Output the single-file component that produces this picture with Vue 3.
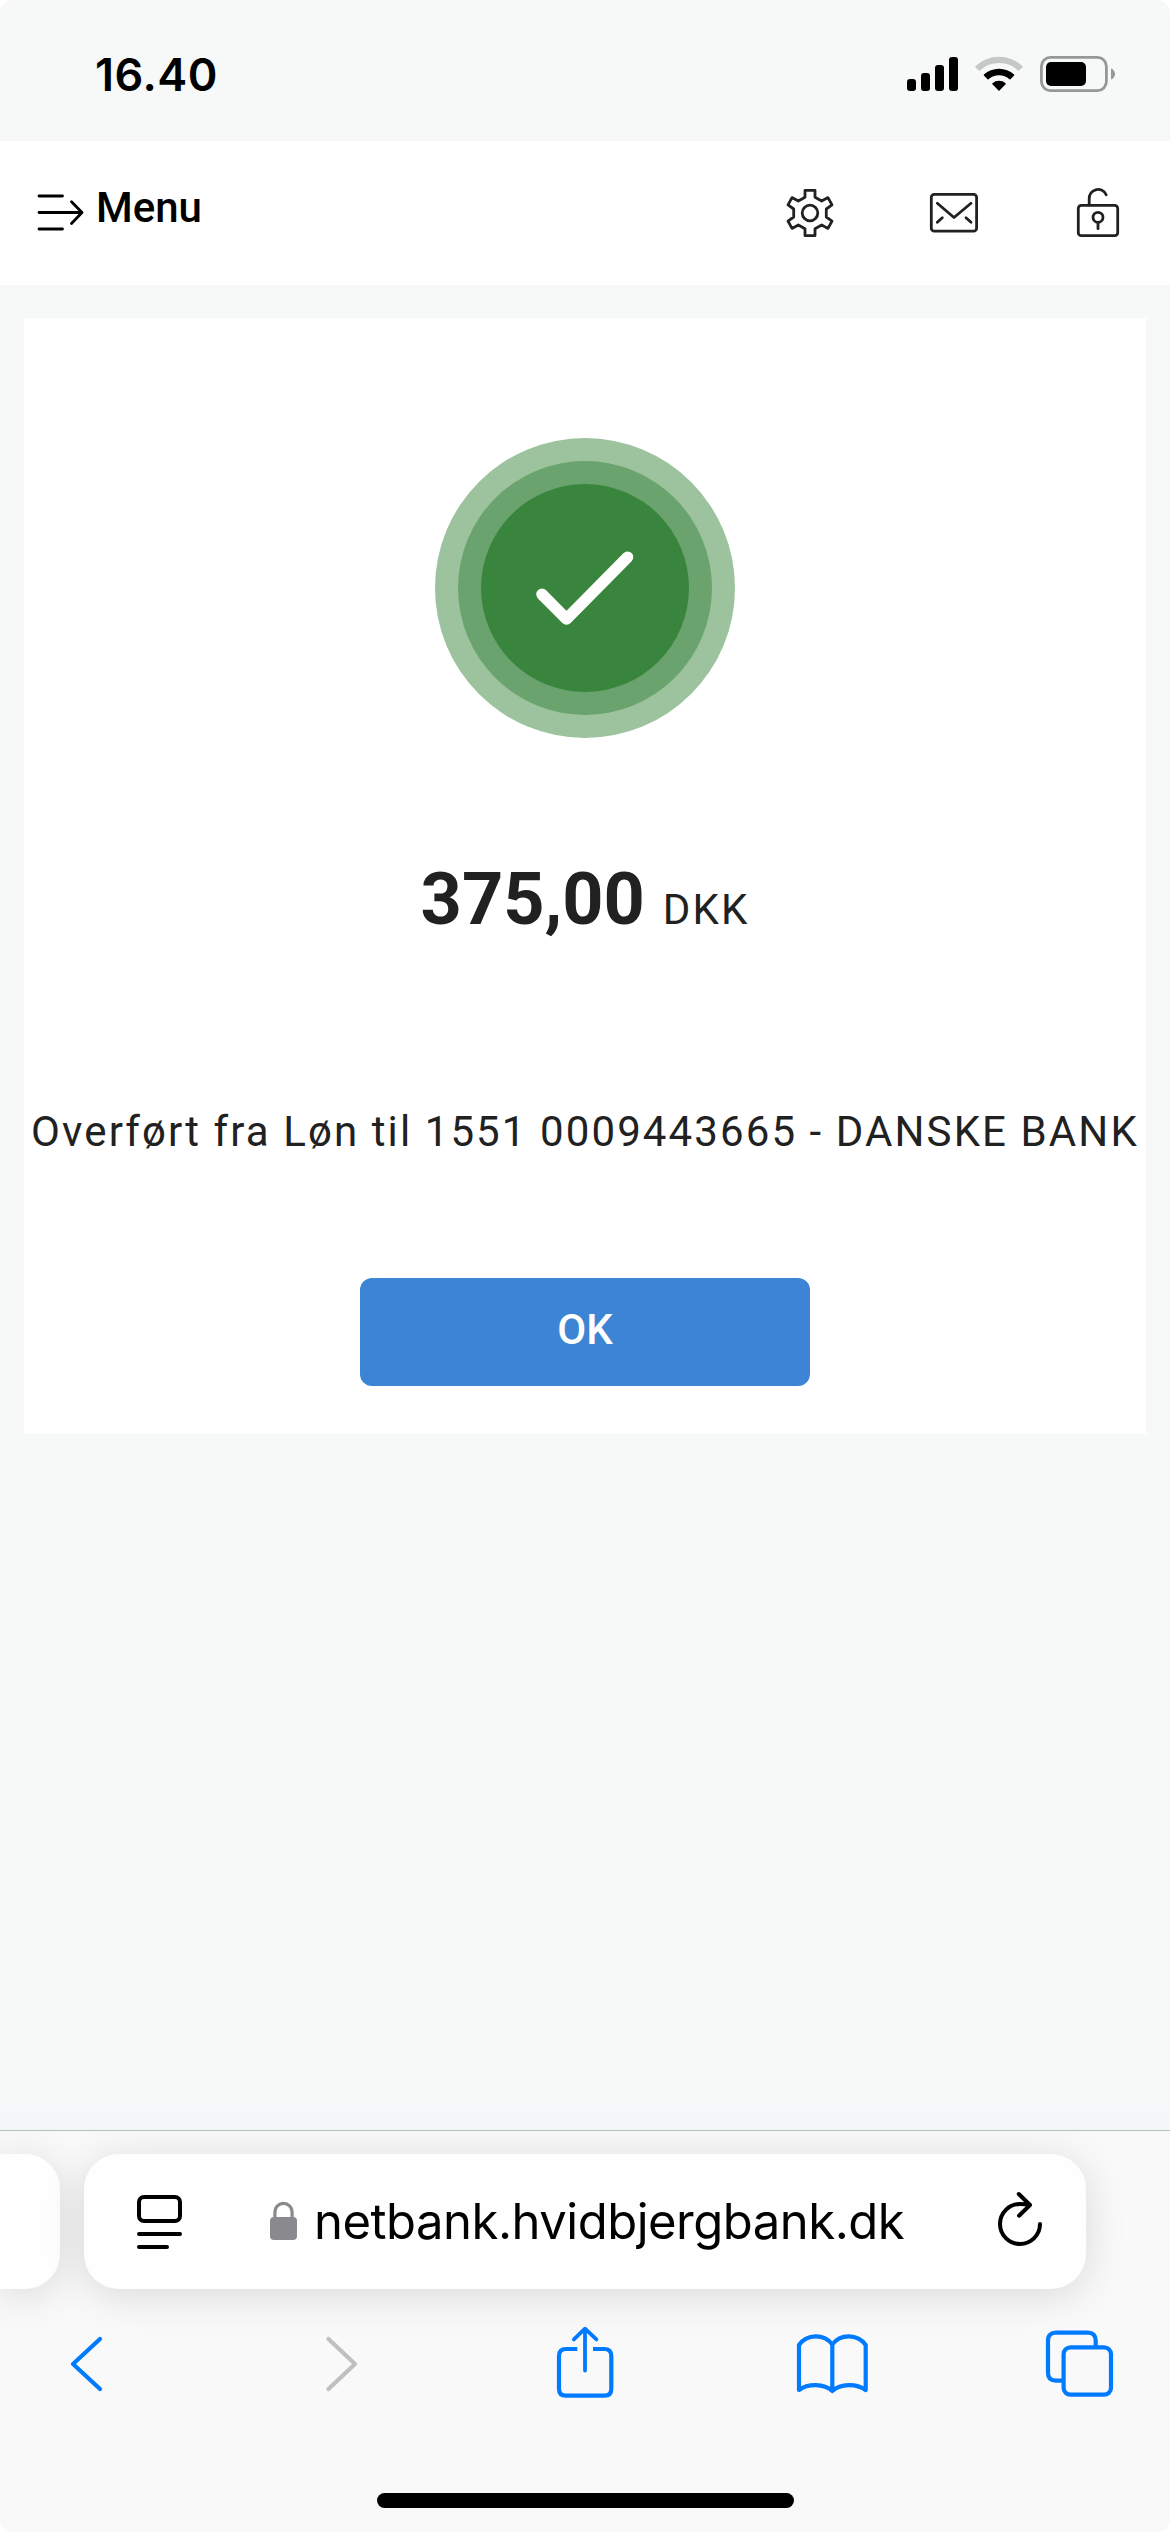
<script setup>
const time = '16.40'
const amount = '375,00'
const currency = 'DKK'
const message = 'Overført fra Løn til 1551 0009443665 - DANSKE BANK'
const host = 'netbank.hvidbjergbank.dk'
</script>

<template>
  <div class="screen">
    <div class="status">
      <span class="clock">{{ time }}</span>
      <div class="indicators">
        <svg class="signal" width="51" height="36" viewBox="0 0 51 36">
          <rect x="0" y="24" width="9" height="12" rx="3" />
          <rect x="14" y="18" width="9" height="18" rx="3" />
          <rect x="28" y="10" width="9" height="26" rx="3" />
          <rect x="42" y="2" width="9" height="34" rx="3" />
        </svg>
        <svg class="wifi" width="48" height="36" viewBox="0 0 48 36">
          <path d="M0.4 11.2A34.5 34.5 0 0 1 47.6 11.2Q48 11.7 47.6 12.2L44 15.6Q43.5 16 43 15.5A27.5 27.5 0 0 0 5 15.5Q4.5 16 4 15.6L0.4 12.2Q0 11.7 0.4 11.2Z" fill="#c5c8c8" />
          <path d="M8.9 19.6A22.5 22.5 0 0 1 39.1 19.6Q39.6 20.1 39.1 20.6L35.5 24.2Q35 24.6 34.5 24.2A15.6 15.6 0 0 0 13.5 24.2Q13 24.6 12.5 24.2L8.9 20.6Q8.4 20.1 8.9 19.6Z" />
          <path d="M17.4 28.2A10.3 10.3 0 0 1 30.6 28.2Q31.1 28.7 30.6 29.2L24.5 35.4Q24 35.9 23.5 35.4L17.4 29.2Q16.9 28.7 17.4 28.2Z" />
        </svg>
        <svg class="battery" width="75" height="36" viewBox="0 0 75 36">
          <rect x="1.4" y="1.4" width="65" height="33.2" rx="9" fill="none" stroke="#969797" stroke-width="2.8" />
          <rect x="6" y="6" width="40" height="24" rx="5" />
          <path d="M71 12.5C73.5 13.3 75 15.6 75 18S73.5 22.7 71 23.5Z" fill="#969797" />
        </svg>
      </div>
    </div>

    <header class="header">
      <div class="menu">
        <svg width="48" height="38" viewBox="0 0 48 38" class="line black">
          <path d="M2 2H25.500M2 18.500H44M2 35H25.500M34.500 7.800L45 18.500L34.500 29.500" />
        </svg>
        <span class="menu-label">Menu</span>
      </div>
      <div class="actions">
        <svg width="48" height="48" viewBox="0 0 48 48" class="line">
          <path d="M19 1.300H29V8.200L35.700 12L42 8.600L46 15.900L40.300 20V28L46 32.100L42 39.400L35.700 36L29 39.800V46.700H19V39.800L12.300 36L6 39.400L2 32.100L7.700 28V20L2 15.900L6 8.600L12.300 12L19 8.200Z" />
          <circle cx="24" cy="24" r="7.800" />
        </svg>
        <svg width="48" height="48" viewBox="0 0 48 48" class="line">
          <rect x="1.300" y="5.300" width="45.300" height="36.900" rx="3" />
          <path d="M7.300 14.300L24 28.500L41 14.300M12.300 28.700L7.300 33.300M36 28.700L41 33.300" />
        </svg>
        <svg width="48" height="48" viewBox="0 0 48 48" class="line">
          <rect x="4.300" y="16.300" width="39.400" height="30.400" rx="3" />
          <path d="M15.200 16V10.300A8.900 8.900 0 0 1 32.200 5.800M24 33.500V39.700" />
          <circle cx="24" cy="28.300" r="5" />
        </svg>
      </div>
    </header>

    <main class="card">
      <svg class="badge" width="300" height="300" viewBox="0 0 300 300">
        <circle cx="150" cy="150" r="150" fill="#9cc29e" />
        <circle cx="150" cy="150" r="127" fill="#6aa36e" />
        <circle cx="150" cy="150" r="104" fill="#3a853d" />
        <path d="M107 156.300L131.500 181L192.500 119.200" fill="none" stroke="#fff" stroke-width="11.600" stroke-linecap="round" stroke-linejoin="round" />
      </svg>
      <div class="sum">
        <strong class="amount">{{ amount }}</strong>
        <span class="currency">{{ currency }}</span>
      </div>
      <p class="message">{{ message }}</p>
      <button class="ok" type="button">OK</button>
    </main>

    <footer class="browser">
      <div class="tabs">
        <div class="pill previous"></div>
        <div class="pill current">
          <svg class="reader" width="45" height="54" viewBox="0 0 45 54">
            <g fill="none" stroke="#000" stroke-width="4" stroke-linecap="round">
              <rect x="2" y="2" width="41" height="24" rx="5" />
              <path d="M2 39H43M2 52H30" />
            </g>
          </svg>
          <svg class="padlock" width="27" height="39" viewBox="0 0 27 39">
            <rect y="16" width="27" height="23" rx="4" fill="#8a8a8e" />
            <path d="M4.900 18V11A8.600 8.600 0 0 1 22.100 11V18" fill="none" stroke="#8a8a8e" stroke-width="3.200" />
          </svg>
          <span class="host">{{ host }}</span>
          <svg class="reload" width="46" height="56" viewBox="0 0 46 56">
            <path d="M43 32A20 20 0 1 1 23 12Q28 12 33 13M21.800 2L33 13L22 23.700" fill="none" stroke="#000" stroke-width="4" stroke-linecap="round" stroke-linejoin="round" />
          </svg>
        </div>
      </div>
      <nav class="nav">
        <svg width="68" height="72" viewBox="0 0 68 72"><path d="M43 13L16 38L43 63" /></svg>
        <svg width="68" height="72" viewBox="0 0 68 72" class="disabled"><path d="M24.500 13L51 38L24.500 63" /></svg>
        <svg width="68" height="72" viewBox="0 0 68 72">
          <path d="M26.300 23H15Q8 23 8 30V62.700Q8 69.700 15 69.700H53.300Q60.300 69.700 60.300 62.700V30Q60.300 23 53.300 23H42" stroke-linecap="butt" />
          <path d="M34 44.500V3.500M22.900 13.400L34 2.700L45.400 13.400" stroke-width="3.800" />
        </svg>
        <svg width="68" height="72" viewBox="0 0 68 72">
          <path d="M34.300 18.500C26 7.500 9 7.800 1 19V64C10 57.300 26 57.300 34.300 65C42.500 57.300 58.500 57.300 67.700 64V19C59.500 7.800 42.500 7.500 34.300 18.500V65" />
        </svg>
        <svg width="68" height="72" viewBox="0 0 68 72">
          <path d="M50.700 20V14.500Q50.700 6.700 43 6.700H11Q3 6.700 3 14.500V47Q3 54.600 11 54.600H17" stroke-linecap="butt" />
          <rect x="18.600" y="21.300" width="47.400" height="47.400" rx="7" />
        </svg>
      </nav>
      <div class="home"></div>
    </footer>
  </div>
</template>

<style>
body {
  margin: 0;
  background: #fff;
}
</style>

<style scoped>
.screen {
  box-sizing: border-box;
  display: flex;
  flex-direction: column;
  width: 1170px;
  height: 2532px;
  overflow: hidden;
  border-radius: 13px;
  background: linear-gradient(#f7f9f8 0 2102px, #f4f8fa 2112px, #f3f7f8 2130px);
  color: #212121;
  font-family: Roboto, "Liberation Sans", sans-serif;
}
svg {
  display: block;
  flex: none;
  overflow: visible;
}
.status {
  display: flex;
  flex: none;
  justify-content: space-between;
  height: 141px;
  padding: 0 55px 0 95px;
  color: #000;
}
.clock {
  margin-top: 47px;
  font: 600 45px/56px Inter, sans-serif;
  letter-spacing: 0.5px;
}
.indicators {
  display: flex;
  margin-top: 55px;
}
.wifi {
  margin-left: 17px;
}
.battery {
  margin: 1px 0 0 17px;
}
.header {
  display: flex;
  flex: none;
  justify-content: space-between;
  align-items: center;
  box-sizing: border-box;
  height: 144px;
  padding: 0 48px 0 37px;
  background: #fff;
}
.menu {
  display: flex;
  align-items: center;
  gap: 11px;
  color: #000;
}
.menu-label {
  margin-top: -10px;
  font-size: 42px;
  line-height: 50px;
  font-weight: 500;
}
.actions {
  display: flex;
  gap: 96px;
}
.line {
  fill: none;
  stroke: #212121;
  stroke-width: 2.8;
  stroke-linecap: round;
  stroke-linejoin: round;
}
.line.black {
  stroke: #000;
}
.card {
  display: flex;
  flex: none;
  flex-direction: column;
  align-items: center;
  box-sizing: border-box;
  width: 1122px;
  height: 1116px;
  margin: 33px auto 0;
  padding-top: 120px;
  background: #fff;
}
.sum {
  display: flex;
  align-items: baseline;
  gap: 18px;
  height: 86px;
  margin-top: 119px;
  line-height: 86px;
}
.amount {
  font-size: 72px;
  font-weight: 700;
}
.currency {
  font-size: 42px;
  letter-spacing: 2.1px;
}
.message {
  margin: 164px 0 0;
  font-size: 42px;
  line-height: 50px;
  letter-spacing: 2.1px;
  white-space: nowrap;
}
.ok {
  width: 450px;
  height: 108px;
  margin-top: 121px;
  padding: 0 0 4px;
  border: 0;
  border-radius: 12px;
  background: #3d85d4;
  color: #fff;
  font: 500 42px/50px Roboto, sans-serif;
}
.browser {
  display: flex;
  flex-direction: column;
  box-sizing: border-box;
  height: 402px;
  margin-top: auto;
  border-top: 1px solid #b9bcbe;
  background: #f9f9f9;
  overflow: hidden;
}
.tabs {
  display: flex;
  flex: none;
  gap: 24px;
  margin-top: 23px;
}
.pill {
  height: 135px;
  background: #fefefe;
  box-shadow: 0 6px 42px rgba(0, 0, 0, 0.13);
}
.previous {
  width: 60px;
  border-radius: 0 35px 35px 0;
}
.current {
  display: flex;
  align-items: flex-start;
  box-sizing: border-box;
  width: 1002px;
  padding: 40px 43px 0 53px;
  border-radius: 35px;
}
.reader {
  margin-top: 1px;
}
.padlock {
  margin: 7px 0 0 88px;
}
.host {
  margin: -2px 0 0 17px;
  color: #000;
  font: 400 49px/60px Inter, sans-serif;
  letter-spacing: -0.5px;
  white-space: nowrap;
}
.reload {
  margin: -2px 0 0 auto;
}
.nav {
  display: flex;
  flex: none;
  gap: 179px;
  margin-top: 37px;
  padding-left: 57px;
}
.nav svg {
  fill: none;
  stroke: #007aff;
  stroke-width: 4.2;
  stroke-linecap: round;
  stroke-linejoin: round;
}
.nav .disabled {
  stroke: #c0c0c0;
}
.home {
  flex: none;
  width: 417px;
  height: 15px;
  margin: 95px auto 0;
  border-radius: 8px;
  background: #000;
}
</style>
